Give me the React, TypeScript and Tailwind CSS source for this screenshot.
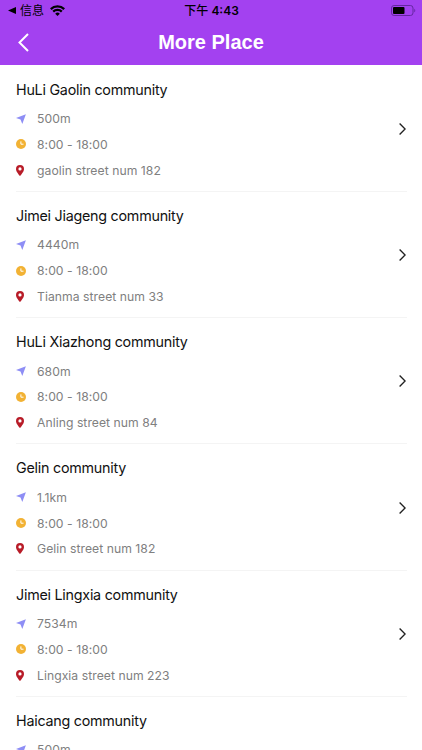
type Place = { name: string; distance: string; hours: string; address: string };

const places: Place[] = [
  { name: "HuLi Gaolin community", distance: "500m", hours: "8:00 - 18:00", address: "gaolin street num 182" },
  { name: "Jimei Jiageng community", distance: "4440m", hours: "8:00 - 18:00", address: "Tianma street num 33" },
  { name: "HuLi Xiazhong community", distance: "680m", hours: "8:00 - 18:00", address: "Anling street num 84" },
  { name: "Gelin community", distance: "1.1km", hours: "8:00 - 18:00", address: "Gelin street num 182" },
  { name: "Jimei Lingxia community", distance: "7534m", hours: "8:00 - 18:00", address: "Lingxia street num 223" },
  { name: "Haicang community", distance: "500m", hours: "", address: "" },
];

function ArrowIcon() {
  return (
    <svg className="h-[10px] w-[10px]" viewBox="0 0 10 10" fill="#8e8ef5">
      <path d="M9.9 0.3 0 3.9 4.5 5.6 6.3 9.9Z" />
    </svg>
  );
}

function ClockIcon() {
  return (
    <svg className="h-[10px] w-[10px]" viewBox="0 0 10 10">
      <circle cx="5" cy="5" r="5" fill="#f2b234" />
      <path d="M4.9 2.4V5.2H7.5" fill="none" stroke="#fff" strokeWidth="1" />
    </svg>
  );
}

function PinIcon() {
  return (
    <svg className="h-[11px] w-[8px]" viewBox="0 0 8 11">
      <path
        fillRule="evenodd"
        fill="#b81c28"
        d="M4 0a4 4 0 0 0-4 4c0 2.4 2.6 5.6 4 7 1.4-1.4 4-4.6 4-7a4 4 0 0 0-4-4Zm0 2.3a1.6 1.6 0 1 1 0 3.2 1.6 1.6 0 0 1 0-3.2Z"
      />
    </svg>
  );
}

function Detail({ icon, text }: { icon: React.ReactNode; text: string }) {
  return (
    <div className="flex h-[25.75px] items-center">
      <span className="flex w-[21px] shrink-0 items-center">{icon}</span>
      <span className="pt-px text-[12.2px] leading-4 tracking-[0.04px] whitespace-nowrap text-[#808080]">{text}</span>
    </div>
  );
}

function PlaceRow({ place }: { place: Place }) {
  return (
    <li className="flex h-[126.25px] shrink-0 items-center border-b border-[#f4f4f4] pt-[14px] pb-2">
      <div className="h-[103.25px] flex-1">
        <h2 className="mb-1.5 text-[14.3px] leading-5 tracking-[-0.24px] text-[#111]">{place.name}</h2>
        <Detail icon={<ArrowIcon />} text={place.distance} />
        {place.hours && <Detail icon={<ClockIcon />} text={place.hours} />}
        {place.address && <Detail icon={<PinIcon />} text={place.address} />}
      </div>
      <svg className="mr-px mb-[5px] h-3 w-[7px]" viewBox="0 0 7 12" fill="none" stroke="#222" strokeWidth="1.4">
        <path d="M0.6 0.6 6.1 6 0.6 11.4" />
      </svg>
    </li>
  );
}

function StatusBar() {
  return (
    <div className="grid h-[21px] grid-cols-3 items-center pr-[6px] pl-2 text-black">
      <div className="flex items-center">
        <svg className="h-[7px] w-2" viewBox="0 0 8 7">
          <path d="M0 3.5 8 0V7Z" />
        </svg>
        <span className="ml-1 text-[12px] leading-4">信息</span>
        <svg className="ml-[6px] h-[11px] w-[15px]" viewBox="0 0 15 11" fill="none" stroke="#000" strokeWidth="2.3">
          <path d="M0.8 4.1a9.5 9.5 0 0 1 13.4 0M3.2 6.6a6.1 6.1 0 0 1 8.6 0" />
          <path d="M7.5 11 5.2 8.7a3.2 3.2 0 0 1 4.6 0Z" fill="#000" stroke="none" />
        </svg>
      </div>
      <div className="pr-px text-center text-[12px] leading-4 font-medium whitespace-nowrap">
        下午 <span className="font-semibold">4:43</span>
      </div>
      <svg className="h-[11px] w-[25px] justify-self-end" viewBox="0 0 25 11">
        <rect x="0.5" y="0.5" width="21.5" height="10" rx="2.6" fill="none" stroke="#6427a0" />
        <rect x="2" y="2" width="11.5" height="7" rx="1" />
        <path d="M23.3 3.7c1.3.5 1.3 3.1 0 3.6Z" fill="#6427a0" />
      </svg>
    </div>
  );
}

export default function App() {
  return (
    <main className="flex h-[750px] w-[422px] flex-col overflow-hidden bg-white font-[Inter,'Noto_Sans_CJK_SC',sans-serif]">
      <header className="h-[65.25px] shrink-0 bg-[#a341f0]">
        <StatusBar />
        <div className="grid h-[43px] grid-cols-[40px_1fr_40px] items-center">
          <svg className="ml-[18px] h-[19px] w-[11px]" viewBox="0 0 11 19" fill="none" stroke="#fff" strokeWidth="2">
            <path d="M10 1 1.5 9.5 10 18" />
          </svg>
          <h1 className="-mt-0.5 text-center font-['Liberation_Sans',Arial,sans-serif] text-[20px] leading-6 font-bold text-white">
            More Place
          </h1>
        </div>
      </header>
      <ul className="flex flex-col pt-[0.4px] pr-[15px] pl-4">
        {places.map((place) => (
          <PlaceRow key={place.name} place={place} />
        ))}
      </ul>
    </main>
  );
}
